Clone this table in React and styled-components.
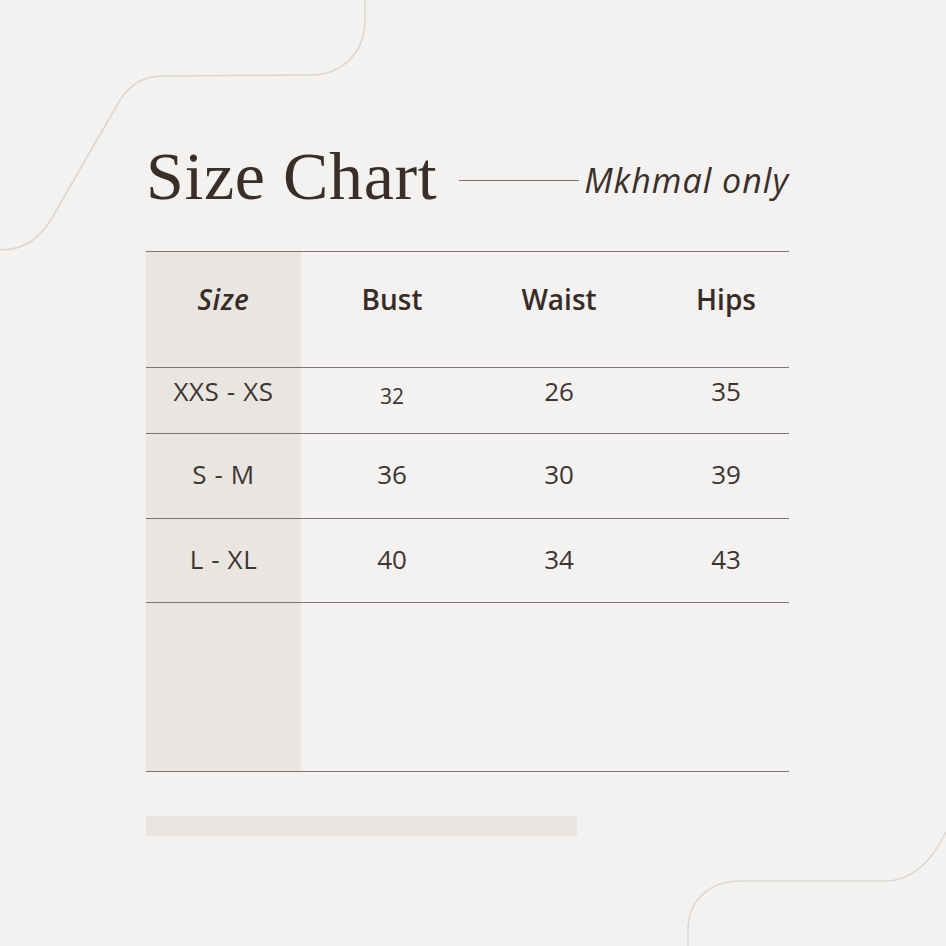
import React from 'react';
import styled, { createGlobalStyle } from 'styled-components';

const GlobalStyle = createGlobalStyle`
  html, body {
    margin: 0;
    padding: 0;
    background: #f3f2f1;
  }
  * {
    box-sizing: border-box;
  }
`;

const Page = styled.div`
  position: relative;
  width: 946px;
  height: 946px;
  overflow: hidden;
  background: #f3f2f1;
  font-family: "Open Sans", "Liberation Sans", sans-serif;
  color: #3a302b;
`;

const Curves = styled.svg`
  position: absolute;
  left: 0;
  top: 0;
  width: 946px;
  height: 946px;
  pointer-events: none;
`;

const Content = styled.div`
  position: relative;
  width: 643px;
  margin-left: 146px;
  padding-top: 142px;
`;

const Header = styled.div`
  display: flex;
  align-items: baseline;
  height: 109px;
  white-space: nowrap;
`;

const Title = styled.h1`
  flex-shrink: 0;
  margin: 0;
  font-family: "Liberation Serif", "DejaVu Serif", serif;
  font-weight: 400;
  font-size: 68px;
  line-height: 1;
  letter-spacing: 0.6px;
  color: #3a2e28;
`;

const Rule = styled.span`
  flex-shrink: 0;
  display: inline-block;
  width: 120px;
  height: 1.5px;
  margin: 0 5px 0 22px;
  background: #7a716c;
  transform: translateY(-18px);
`;

const Subtitle = styled.span`
  flex-shrink: 0;
  font-style: italic;
  font-size: 34px;
  letter-spacing: 1px;
  color: #3a302b;
  transform: translateY(-6px);
`;

const Table = styled.div`
  border-top: 1.5px solid #7d7571;
`;

const Row = styled.div`
  display: grid;
  grid-template-columns: 155px 182px 152px 1fr;
  height: ${p => p.h}px;
  border-bottom: 1.5px solid #7d7571;
`;

const Cell = styled.div`
  display: flex;
  justify-content: center;
  align-items: flex-start;
  white-space: nowrap;
  padding-top: ${p => p.top}px;
  padding-left: ${p => p.shift || 0}px;
  background: ${p => (p.shade ? '#e9e6e2' : 'transparent')};
  font-size: ${p => (p.head ? 28 : p.small ? 21 : 26)}px;
  font-weight: ${p => (p.head ? 600 : 400)};
  font-style: ${p => (p.italic ? 'italic' : 'normal')};
  letter-spacing: ${p => (p.wide ? 0.6 : 0)}px;
  line-height: 1.2;
  color: ${p => (p.head ? '#372b26' : '#3d3531')};
`;

const Bar = styled.div`
  width: 431px;
  height: 20px;
  margin-top: 44px;
  background: #e8e4e0;
`;

const rows = [
  { size: 'XXS - XS', bust: '32', waist: '26', hips: '35', h: 66, top: 8, smallBust: true },
  { size: 'S - M', bust: '36', waist: '30', hips: '39', h: 85, top: 25 },
  { size: 'L - XL', bust: '40', waist: '34', hips: '43', h: 84, top: 25 },
];

const App = () => (
  <Page>
    <GlobalStyle />
    <Curves viewBox="0 0 946 946">
      <path
        d="M0,250 C25,250 40,238 52,218 L120,100 C132,82 145,76 165,76 L310,75 C345,75 365,50 365,20 L365,0"
        fill="none"
        stroke="#dbd6d1"
        strokeWidth="1.6"
      />
      <path
        d="M688,946 L688,930 C688,900 710,881 740,881 L885,881 C910,881 930,865 946,832"
        fill="none"
        stroke="#dbd6d1"
        strokeWidth="1.6"
      />
    </Curves>
    <Content>
      <Header>
        <Title>Size Chart</Title>
        <Rule />
        <Subtitle>Mkhmal only</Subtitle>
      </Header>
      <Table>
        <Row h={116}>
          <Cell shade head italic wide top={31}>Size</Cell>
          <Cell head top={31}>Bust</Cell>
          <Cell head top={31}>Waist</Cell>
          <Cell head top={31} shift={28}>Hips</Cell>
        </Row>
        {rows.map(r => (
          <Row h={r.h} key={r.size}>
            <Cell shade wide top={r.top}>{r.size}</Cell>
            <Cell small={r.smallBust} top={r.smallBust ? r.top + 8 : r.top}>{r.bust}</Cell>
            <Cell top={r.top}>{r.waist}</Cell>
            <Cell top={r.top} shift={28}>{r.hips}</Cell>
          </Row>
        ))}
        <Row h={169}>
          <Cell shade />
          <Cell />
          <Cell />
          <Cell />
        </Row>
      </Table>
      <Bar />
    </Content>
  </Page>
);

export default App;
